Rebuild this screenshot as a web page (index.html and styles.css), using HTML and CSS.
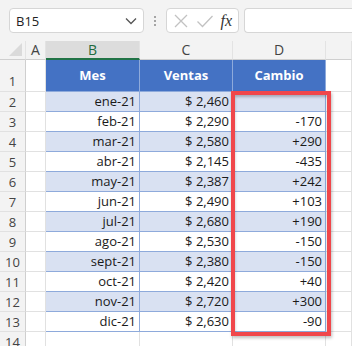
FILE: index.html
```html
<!DOCTYPE html>
<html>
<head>
<meta charset="utf-8">
<link rel="stylesheet" href="styles.css">
</head>
<body>
<div class="app">
  <div class="topbar">
    <div class="namebox">
      <span class="ref">B15</span>
      <svg class="chev" width="12" height="8" viewBox="0 0 12 8"><path d="M1 1.5 L6 6.5 L11 1.5" fill="none" stroke="#555" stroke-width="1.3"/></svg>
    </div>
    <div class="dots"><i></i><i></i><i></i></div>
    <div class="fbtns">
      <svg width="16" height="16" viewBox="0 0 16 16"><path d="M2 2 L14 14 M14 2 L2 14" stroke="#c2c2c2" stroke-width="1.3" fill="none"/></svg>
      <svg width="18" height="16" viewBox="0 0 18 16"><path d="M1.5 8.5 L6.5 13.5 L16.5 3" stroke="#c2c2c2" stroke-width="1.3" fill="none"/></svg>
      <span class="fx">fx</span>
    </div>
    <div class="finput"></div>
  </div>
  <div class="sheet">
    <div class="grid">
      <div class="ch corner"><span class="tri"></span></div>
      <div class="ch">A</div>
      <div class="ch sel">B</div>
      <div class="ch">C</div>
      <div class="ch">D</div>
      <div class="ch">&nbsp;</div>

      <div class="rh r1">1</div><div class="c r1"></div>
      <div class="c r1 th">Mes</div><div class="c r1 th">Ventas</div><div class="c r1 th">Cambio</div><div class="c r1 e"></div>

      <div class="rh">2</div><div class="c"></div><div class="c t b">ene-21</div><div class="c t b">$ 2,460</div><div class="c t b"></div><div class="c e"></div>
      <div class="rh">3</div><div class="c"></div><div class="c t">feb-21</div><div class="c t">$ 2,290</div><div class="c t">-170</div><div class="c e"></div>
      <div class="rh">4</div><div class="c"></div><div class="c t b">mar-21</div><div class="c t b">$ 2,580</div><div class="c t b">+290</div><div class="c e"></div>
      <div class="rh">5</div><div class="c"></div><div class="c t">abr-21</div><div class="c t">$ 2,145</div><div class="c t">-435</div><div class="c e"></div>
      <div class="rh">6</div><div class="c"></div><div class="c t b">may-21</div><div class="c t b">$ 2,387</div><div class="c t b">+242</div><div class="c e"></div>
      <div class="rh">7</div><div class="c"></div><div class="c t">jun-21</div><div class="c t">$ 2,490</div><div class="c t">+103</div><div class="c e"></div>
      <div class="rh">8</div><div class="c"></div><div class="c t b">jul-21</div><div class="c t b">$ 2,680</div><div class="c t b">+190</div><div class="c e"></div>
      <div class="rh">9</div><div class="c"></div><div class="c t">ago-21</div><div class="c t">$ 2,530</div><div class="c t">-150</div><div class="c e"></div>
      <div class="rh">10</div><div class="c"></div><div class="c t b">sept-21</div><div class="c t b">$ 2,380</div><div class="c t b">-150</div><div class="c e"></div>
      <div class="rh">11</div><div class="c"></div><div class="c t">oct-21</div><div class="c t">$ 2,420</div><div class="c t">+40</div><div class="c e"></div>
      <div class="rh">12</div><div class="c"></div><div class="c t b">nov-21</div><div class="c t b">$ 2,720</div><div class="c t b">+300</div><div class="c e"></div>
      <div class="rh">13</div><div class="c"></div><div class="c t">dic-21</div><div class="c t">$ 2,630</div><div class="c t">-90</div><div class="c e"></div>
      <div class="rh">14</div><div class="c"></div><div class="c"></div><div class="c"></div><div class="c"></div><div class="c e"></div>
    </div>
    <div class="highlight"></div>
  </div>
</div>
</body>
</html>
```
FILE: styles.css
```css
* { box-sizing: border-box; }
html, body { margin: 0; padding: 0; }
body {
  width: 352px; height: 346px; overflow: hidden;
  background: #fff;
  font-family: "Open Sans", "Liberation Sans", sans-serif;
  color: #1f1f1f;
}
.topbar {
  height: 41px;
  background: #f3f3f3;
  display: flex;
  align-items: center;
  padding: 0 0 0 9px;
}
.namebox {
  width: 135px; height: 25px;
  background: #fff;
  border: 1px solid #d6d6d6;
  border-radius: 4px;
  display: flex; align-items: center; justify-content: space-between;
  padding: 0 6px 0 6px;
  font-size: 13px;
  color: #222;
}
.dots {
  width: 22px;
  display: flex; flex-direction: column; align-items: center; gap: 2px;
}
.dots i { width: 2px; height: 2px; background: #8a8a8a; border-radius: 1px; display: block; }
.fbtns {
  width: 73px; height: 25px;
  background: #fff;
  border: 1px solid #d6d6d6;
  border-radius: 4px;
  display: flex; align-items: center; justify-content: space-between;
  padding: 0 6px 0 6px;
}
.fx { font-family: "Liberation Serif", serif; font-style: italic; font-size: 16px; color: #333; }
.finput {
  margin-left: 5px;
  flex: 1; height: 25px;
  background: #fff;
  border: 1px solid #d6d6d6;
  border-radius: 4px 0 0 4px;
  border-right: none;
}
.sheet { position: relative; }
.grid {
  display: grid;
  grid-template-columns: 26px 20px 94px 93px 93px 1fr;
  grid-template-rows: 19px 32px repeat(13, 20px);
}
.grid > div {
  border-right: 1px solid #e1e1e1;
  border-bottom: 1px solid #e1e1e1;
  font-size: 13px;
  line-height: 19px;
  white-space: nowrap;
}
.ch {
  background: #f3f3f3;
  color: #444;
  text-align: center;
  line-height: 18px !important;
  font-size: 14px !important;
}
.grid > .ch { border-right: 1px solid #e3e3e3; border-bottom: 1px solid #cfcfcf; }
.grid > .ch.sel { background: #dcdcdc; color: #1f6b3f; border-bottom: 2px solid #217346; }
.corner { position: relative; }
.tri {
  position: absolute; right: 3px; bottom: 3px;
  width: 0; height: 0;
  border-left: 13px solid transparent;
  border-bottom: 13px solid #dadada;
}
.grid > .rh {
  background: #f3f3f3;
  color: #444;
  text-align: center;
  border-right: 1px solid #cfcfcf;
  border-bottom: 1px solid #e1e1e1;
  font-size: 13px;
  padding-top: 1px;
}
.grid > .rh.r1 { padding-top: 12px; }
.grid > .c.th {
  background: #4472c4;
  color: #fff;
  font-weight: bold;
  text-align: center;
  border-right: 1px solid #8eaadb;
  border-bottom: 1px solid #8eaadb;
  padding-top: 6px;
}
.grid > .c.t {
  text-align: right;
  padding-right: 3px;
  border-right: 1px solid #8eaadb;
  border-bottom: 1px solid #8eaadb;
  color: #1a1a1a;
}
.grid > .c.t.b { background: #d9e1f2; }
.highlight {
  position: absolute;
  left: 231px; top: 50px;
  width: 100px; height: 245px;
  border: 4px solid #f0474b;
  box-shadow: inset 0 2px 3px rgba(0,0,0,0.25), 1px 2px 3px rgba(0,0,0,0.25);
  pointer-events: none;
}
```
